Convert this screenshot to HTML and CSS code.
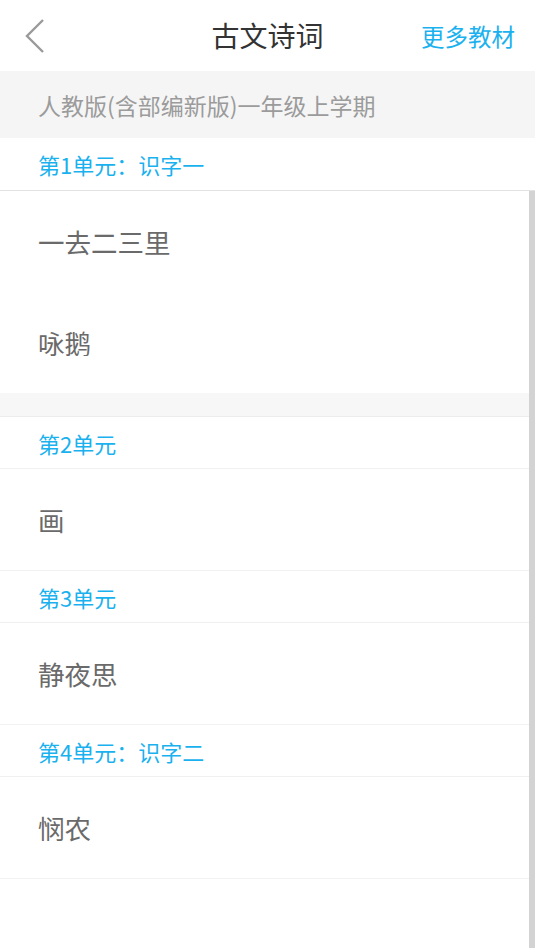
FILE: index.html
```html
<!DOCTYPE html>
<html lang="zh">
<head>
<meta charset="utf-8">
<title>古文诗词</title>
<link rel="stylesheet" href="styles.css">
</head>
<body>
<div class="app">
  <header class="topbar">
    <div class="back">
      <svg width="20" height="34" viewBox="0 0 20 34"><polyline points="18,1 2,17 18,33" fill="none" stroke="#9a9a9a" stroke-width="2.4"/></svg>
    </div>
    <div class="title">古文诗词</div>
    <div class="more">更多教材</div>
  </header>
  <div class="edition">人教版(含部编新版)一年级上学期</div>
  <div class="unit-head first">第1单元：识字一</div>
  <div class="main">
    <div class="list">
      <div class="poem plain">一去二三里</div>
      <div class="poem plain">咏鹅</div>
      <div class="gap"></div>
      <div class="unit-head">第2单元</div>
      <div class="poem">画</div>
      <div class="unit-head">第3单元</div>
      <div class="poem">静夜思</div>
      <div class="unit-head">第4单元：识字二</div>
      <div class="poem">悯农</div>
    </div>
    <div class="scrollbar"></div>
  </div>
</div>
</body>
</html>
```
FILE: styles.css
```css
html, body {
  margin: 0;
  padding: 0;
  background: #fff;
}
body {
  font-family: "Noto Sans CJK SC", "Noto Sans", sans-serif;
}
.app {
  width: 535px;
  height: 951px;
  overflow: hidden;
  display: flex;
  flex-direction: column;
}
.topbar {
  height: 71px;
  flex: none;
  display: flex;
  align-items: center;
  position: relative;
}
.back {
  width: 20px;
  height: 34px;
  margin-left: 25px;
  margin-top: 1px;
  display: flex;
}
.title {
  position: absolute;
  left: 0;
  right: 0;
  text-align: center;
  font-size: 28px;
  color: #333;
  line-height: 71px;
  pointer-events: none;
}
.more {
  margin-left: auto;
  margin-right: 20px;
  font-size: 23.5px;
  color: #1ab1ef;
}
.edition {
  height: 67px;
  flex: none;
  background: #f5f5f5;
  display: flex;
  align-items: center;
  padding-left: 38px;
  font-size: 23px;
  color: #9b9b9b;
}
.unit-head {
  height: 51px;
  flex: none;
  display: flex;
  align-items: center;
  padding-left: 38px;
  font-size: 22px;
  color: #1ab1ef;
  border-bottom: 1px solid #f0f0f0;
}
.unit-head.first {
  height: 52px;
  border-bottom-color: #e2e2e2;
}
.main {
  display: flex;
  height: 757px;
  flex: none;
}
.list {
  flex: 1;
  display: flex;
  flex-direction: column;
}
.scrollbar {
  width: 6px;
  background: #d3d3d3;
}
.poem {
  height: 101px;
  flex: none;
  display: flex;
  align-items: center;
  padding-left: 38px;
  font-size: 26.5px;
  color: #6a6a6a;
  border-bottom: 1px solid #f2f2f2;
}
.poem.plain {
  border-bottom: none;
}
.gap {
  height: 23px;
  flex: none;
  background: #f7f7f7;
  border-bottom: 1px solid #ececec;
}
```
